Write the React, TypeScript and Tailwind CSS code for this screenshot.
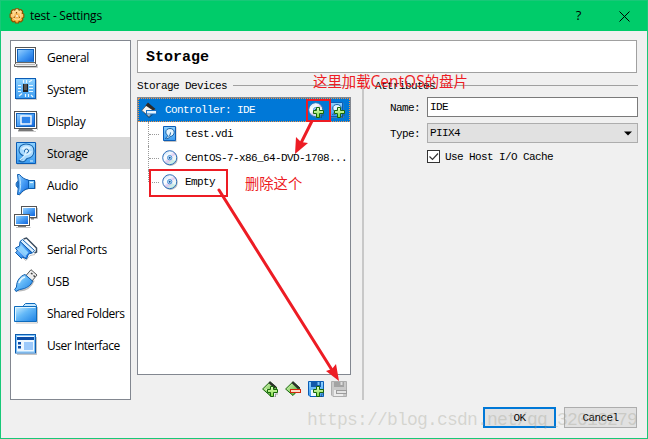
import type { ReactNode } from "react";

const mono = "font-['Liberation_Mono','Noto_Sans_CJK_SC',monospace] text-[11px] tracking-[-0.6px] leading-3 whitespace-pre";
const sans = "font-['Open_Sans','Noto_Sans',sans-serif] text-[12px] whitespace-pre";

// Gradients shared by every icon in the window
function Gradients() {
  return (
    <svg width="0" height="0" className="absolute" aria-hidden="true">
      <defs>
        <linearGradient id="screen" x1="0" y1="0" x2="1" y2="1">
          <stop offset="0" stopColor="#9ad2ff" />
          <stop offset="0.5" stopColor="#469cf4" />
          <stop offset="1" stopColor="#1266dc" />
        </linearGradient>
        <linearGradient id="tile" x1="0" y1="0" x2="0" y2="1">
          <stop offset="0" stopColor="#8fd2ff" />
          <stop offset="1" stopColor="#3c9cf0" />
        </linearGradient>
        <linearGradient id="folder" x1="0" y1="0" x2="1" y2="1">
          <stop offset="0" stopColor="#d5f3ff" />
          <stop offset="0.45" stopColor="#64b9f8" />
          <stop offset="1" stopColor="#1c80e4" />
        </linearGradient>
        <linearGradient id="disc" x1="0" y1="0" x2="1" y2="1">
          <stop offset="0" stopColor="#b5d2f2" />
          <stop offset="0.35" stopColor="#f4fbff" />
          <stop offset="0.55" stopColor="#dcc9ee" />
          <stop offset="0.75" stopColor="#c9f3e4" />
          <stop offset="1" stopColor="#a5c8ef" />
        </linearGradient>
        <linearGradient id="gold" x1="0" y1="0" x2="0" y2="1">
          <stop offset="0" stopColor="#ffe9ad" />
          <stop offset="1" stopColor="#fba428" />
        </linearGradient>
        <linearGradient id="green" x1="0" y1="0" x2="1" y2="1">
          <stop offset="0" stopColor="#e6ffc6" />
          <stop offset="1" stopColor="#3fa51c" />
        </linearGradient>
        <linearGradient id="lime" x1="0" y1="0" x2="0" y2="1">
          <stop offset="0" stopColor="#e9ffc8" />
          <stop offset="1" stopColor="#7bd93f" />
        </linearGradient>
      </defs>
    </svg>
  );
}

function Icon24({ children }: { children: ReactNode }) {
  return <svg width="24" height="24" viewBox="0 0 24 24" className="shrink-0">{children}</svg>;
}

function Icon16({ children }: { children: ReactNode }) {
  return <svg width="16" height="16" viewBox="0 0 16 16" className="shrink-0">{children}</svg>;
}

const GeneralIcon = () => (
  <Icon24>
    <path d="M3 22.5H23.5V19" fill="none" stroke="#999" strokeOpacity=".5" />
    <rect x="1.500" y="2.500" width="20" height="15" fill="#fff" stroke="#555" />
    <rect x="3.500" y="4.500" width="16" height="12" fill="url(#screen)" stroke="#1160b8" />
    <path d="M2.500 17.500H20.500L22.500 19.500V21.500H.5V19.500Z" fill="#eee" stroke="#666" />
    <path d="M3 16.500H20" stroke="#2c84de" />
    <path d="M2 19.500H21" stroke="#bbb" />
  </Icon24>
);

const SystemIcon = () => (
  <Icon24>
    <rect x="2" y="2.500" width="21" height="20.500" fill="#999" opacity=".5" />
    <rect x="1.500" y="1.500" width="20" height="20" fill="url(#tile)" stroke="#0b5cb5" />
    <path d="M4 8.500h3M4 11.500h3M4 14.500h3M15 8.500h4M15 11.500h4M15 14.500h4M9.500 3v3M12.500 3v3M15 5l3-2M5 19l3-2.500M11.500 17v3M14.500 17v3M17 18l2 2" stroke="#e8f7ff" strokeWidth="1.200" />
    <rect x="9" y="7" width="5" height="8" fill="#222" />
    <rect x="10" y="7" width="3" height="6" fill="#555" />
  </Icon24>
);

const DisplayIcon = () => (
  <Icon24>
    <path d="M4 22.500h18M23.500 4v17" stroke="#aaa" strokeOpacity=".6" />
    <path d="M5 20h13l2 2H4z" fill="#777" />
    <rect x=".5" y="2.500" width="22" height="17" fill="#fff" stroke="#555" />
    <rect x="2.500" y="4.500" width="18" height="13" fill="url(#screen)" stroke="#1160b8" />
    <rect x="7" y="7" width="10" height="8" fill="#2c83ea" stroke="#fff" strokeWidth="1.400" />
  </Icon24>
);

const DiskShape = () => (
  <>
    <path d="M3 2h19.500v21.500H3z" fill="#888" opacity=".5" />
    <path d="M2.500 1.500h19v21h-19z" fill="url(#tile)" stroke="#0b5cb5" />
    <path d="M12 3c5 0 8 3 8 7s-3 7-7 7.500c-2 3.500-5 4-8 2.500 3-1 4-3 5-5-3-1-5-3-5-6 0-3.500 3-6 7-6z" fill="#a9daff" stroke="#1763aa" strokeWidth="1.100" />
    <path d="M7 8c2-3 7-4 10-1l-4 3zM10 14c4 1 7-1 8-4l-5 1z" fill="#e8f8ff" opacity=".8" />
    <circle cx="12.500" cy="10" r="2" fill="#e8f8ff" stroke="#1763aa" />
    <path d="M12 10c0 4-3 7-6 9" fill="none" stroke="#d5efff" strokeWidth="1.500" />
    <path d="M16 20h3" stroke="#e8f8ff" />
  </>
);

const AudioIcon = () => (
  <Icon24>
    <path d="M5.500 22.500c2.500-4 5-6 9.500-7h6.500v-7" fill="none" stroke="#888" strokeOpacity=".6" />
    <path d="M3.500 1.500h2c3 3.500 5.500 5 9 5.500v8.500c-3.500.500-6 2.500-9 6h-2C4.500 15 4.500 8 3.500 1.500z" fill="url(#screen)" stroke="#0d5cae" />
    <path d="M4 8.500c-2.500 0-2.500 6 0 6z" fill="#3a90e6" stroke="#0d5cae" />
    <path d="M5.500 4c1.500 5 1.500 10 0 15" fill="none" stroke="#b5e0ff" />
    <rect x="14.500" y="7.500" width="6" height="8" fill="url(#tile)" stroke="#0d5cae" />
    <path d="M16 9.500h3" stroke="#e8f8ff" />
  </Icon24>
);

const NetworkIcon = () => (
  <Icon24>
    <path d="M8 13.500h15.500V3M2 22.500h14.500" fill="none" stroke="#888" strokeOpacity=".5" />
    <rect x="7.500" y="1.500" width="15" height="11" fill="#fff" stroke="#555" />
    <rect x="9" y="3" width="12" height="8" fill="url(#screen)" />
    <rect x="17" y="13" width="3" height="1.500" fill="#777" />
    <rect x=".5" y="9.500" width="15" height="11" fill="#fff" stroke="#555" />
    <rect x="2" y="11" width="12" height="8" fill="url(#screen)" />
    <path d="M4 21.500h8" stroke="#777" />
  </Icon24>
);

const SerialIcon = () => (
  <Icon24>
    <path d="M4 17l8 6.500 4-5 5-1" fill="none" stroke="#888" strokeOpacity=".5" />
    <path d="M9.500 2l3-1L22.500 11v4l-2 1" fill="none" stroke="#3b4d60" strokeWidth="1.500" />
    <path d="M8.500 2.500L20.500 13.500l-2 2.500L6 4.500z" fill="#d9efff" stroke="#0d5cae" />
    <path d="M6 4.500L18 16l-3.500 1-2 5-4-2-1 1.500-6-6 2-1.500L1.500 11l4-2z" fill="url(#screen)" stroke="#0d5cae" />
    <path d="M7 8l7.500 7.500-3 3.500-7-7z" fill="#8ed2ff" />
    <path d="M3 11.500l8.500 8.500" stroke="#d5efff" />
  </Icon24>
);

const UsbIcon = () => (
  <Icon24>
    <path d="M3 21.500c9 1 14-3 17-10" fill="none" stroke="#777" strokeOpacity=".5" strokeWidth="1.500" />
    <path d="M17 .700l6 5.300-5 6-6-5.500z" fill="#eee" stroke="#555" />
    <path d="M17 4l1.500 1.300M19.500 6.500L21 7.800" stroke="#444" strokeWidth="1.500" />
    <path d="M11 5.500l7.500 6.500c-1 4-6 8-13 8.500l-3.500 2L.700 20.500 2.500 18C2.500 12 6 7 11 5.500z" fill="url(#folder)" stroke="#0d5cae" />
    <path d="M5 14c1-3 3-5 6-6" fill="none" stroke="#e3f6ff" strokeWidth="1.800" />
  </Icon24>
);

const FolderIcon = () => (
  <Icon24>
    <path d="M2 22h21.500V6" fill="none" stroke="#888" strokeOpacity=".5" />
    <path d="M9.500 6V4.500l2-2H21l1.500 2V20h-13z" fill="#c5e8ff" stroke="#0d6bbd" />
    <path d="M.5 5.500h22v15H.5z" fill="url(#folder)" stroke="#0d6bbd" />
    <path d="M1.500 19.500v-13h20" fill="none" stroke="#e0f5ff" />
  </Icon24>
);

const InterfaceIcon = () => (
  <Icon24>
    <path d="M3 21.500h19.500V4" fill="none" stroke="#888" strokeOpacity=".5" />
    <rect x="1.500" y="1.500" width="20" height="18.500" fill="#fff" stroke="#0d5cae" />
    <rect x="2.500" y="2.500" width="18" height="16.500" fill="#eef7ff" stroke="#79c1fb" />
    <rect x="3" y="4" width="17" height="3" fill="#0b4ca6" />
    <rect x="4" y="9" width="3" height="2.500" fill="#0b4ca6" />
    <rect x="4" y="13" width="3" height="2.500" fill="#0b4ca6" />
    <rect x="10" y="9" width="9" height="8" fill="#9cc9fb" />
  </Icon24>
);

const GearIcon = () => (
  <Icon16>
    <path d="M6.500.700h3l.600 1.500 1.700-.700 2 2-.700 1.800 1.700.700v3.500l-1.700.700.700 1.800-2 2-1.700-.700-.600 1.700h-3l-.700-1.700-1.700.700-2-2 .700-1.800-1.700-.700V6l1.700-.700-.700-1.800 2-2 1.700.700z" fill="url(#gold)" stroke="#8a5200" strokeWidth="1.100" strokeLinejoin="round" />
    <circle cx="8" cy="8" r="4" fill="#ffc56b" stroke="#ffe2a2" strokeWidth=".8" />
    <circle cx="8" cy="8" r="1.500" fill="#fffbe8" stroke="#e09a35" strokeWidth=".7" />
    <path d="M7.500 4v1.500M4.500 9.500L6 9M11 9.500L10 9" stroke="#8a4800" strokeWidth="1.200" />
  </Icon16>
);

const Plus = () => (
  <>
    <path d="M9.500 16h4v-3h2.500" fill="none" stroke="#333" strokeOpacity=".4" />
    <path d="M8.500 5.500h3v3h4v3h-4v4h-3v-4h-3v-3h3z" fill="url(#lime)" stroke="#17670b" />
  </>
);

const Disc = () => (
  <>
    <circle cx="8.500" cy="8.700" r="7.200" fill="#777" opacity=".5" />
    <circle cx="7.700" cy="7.700" r="7" fill="url(#disc)" stroke="#2f6fb9" />
    <path d="M7.700 7.700L3 4.500A6 6 0 0 0 2.500 11zM7.700 7.700l5.500-3A6 6 0 0 1 13.200 11z" fill="#fff" opacity=".65" />
    <circle cx="7.700" cy="7.700" r="2.200" fill="#cdeaff" stroke="#4b97d9" />
    <circle cx="7.700" cy="7.700" r="1" fill="#154f97" />
  </>
);

const DiskSmall = () => (
  <>
    <path d="M2 1h12.500v15H2z" fill="#888" opacity=".5" />
    <path d="M1.500.500h12v14h-12z" fill="url(#tile)" stroke="#0b5cb5" />
    <path d="M8 2.500c2.800 0 4.200 1.800 4.200 3.800 0 2.500-2 4-4 4.200C7 12.500 5.500 13 3.300 12.500c1.500-1 2-2 2.500-3C4.300 8.500 3.800 7.500 3.800 6c0-2 1.700-3.500 4.200-3.500z" fill="#e4f5ff" stroke="#1763aa" />
    <path d="M6 11.500c1.500-1.500 2.500-3 2.500-5" fill="none" stroke="#1763aa" />
  </>
);

const ControllerIcon = () => (
  <Icon16>
    <path d="M2 10l6 5 6-5v1l-6 5z" fill="#234" opacity=".7" />
    <path d="M7 1.500L14 8l-6 6.500L.8 8.500z" fill="#f6f6f4" stroke="#555" strokeWidth=".8" />
    <path d="M7 .5L14.500 7 12 8.500 4.500 3.500z" fill="#2d2a28" />
    <rect x="5.500" y="8.500" width="10" height="3.500" fill="#e5f5ff" stroke="#1771c5" />
  </Icon16>
);

const AddController = () => (
  <Icon16>
    <path d="M8 .8L15 7l-7 7.500L.6 8z" fill="url(#green)" stroke="#17670b" />
    <path d="M8 .3l6.500 5.500L12.500 7.500 6.500 2z" fill="#2c302b" />
    <path d="M3.500 8L8 11" stroke="#eaffde" />
    <Plus />
  </Icon16>
);

const RemoveController = () => (
  <Icon16>
    <path d="M8 .8L15 7l-7 7.500L.6 8z" fill="url(#green)" stroke="#17670b" />
    <path d="M8 .3l7 6.500-2 1.500L6.500 2z" fill="#2c302b" />
    <rect x="5.500" y="8.500" width="10" height="3" fill="#ffd9c5" stroke="#d2260c" />
  </Icon16>
);

const AddAttachment = () => (
  <Icon16>
    <path d="M.5.500h15v15H2L.5 14z" fill="url(#tile)" stroke="#0b5cb5" />
    <path d="M3 1h10v5H3z" fill="#1258a9" />
    <path d="M9.500 1h2v3h-2z" fill="#7bc4fa" />
    <path d="M3 9h9v6H3z" fill="#edf9ff" />
    <Plus />
  </Icon16>
);

const RemoveAttachment = () => (
  <Icon16>
    <path d="M.5.500h15v15H2L.5 14z" fill="#c9c9c9" stroke="#adadad" />
    <path d="M3 1h10v5H3z" fill="#a3a3a3" />
    <path d="M9.500 1h2v3h-2z" fill="#ddd" />
    <path d="M3 9h9v6H3z" fill="#ececec" />
    <rect x="5.500" y="9.500" width="10" height="3" fill="#e3e3e3" stroke="#9c9c9c" />
  </Icon16>
);

const categories = [
  { label: "General", icon: <GeneralIcon /> },
  { label: "System", icon: <SystemIcon /> },
  { label: "Display", icon: <DisplayIcon /> },
  { label: "Storage", icon: <Icon24><DiskShape /></Icon24>, active: true },
  { label: "Audio", icon: <AudioIcon /> },
  { label: "Network", icon: <NetworkIcon /> },
  { label: "Serial Ports", icon: <SerialIcon /> },
  { label: "USB", icon: <UsbIcon /> },
  { label: "Shared Folders", icon: <FolderIcon /> },
  { label: "User Interface", icon: <InterfaceIcon /> },
];

const devices = [
  { label: "test.vdi", icon: <Icon16><DiskSmall /></Icon16> },
  { label: "CentOS-7-x86_64-DVD-1708...", icon: <Icon16><Disc /></Icon16> },
  { label: "Empty", icon: <Icon16><Disc /></Icon16>, last: true },
];

function TitleBar() {
  return (
    <header className="flex h-[30px] items-center bg-[#00cc6a] pl-2">
      <div className="-mt-px"><GearIcon /></div>
      <h1 className={`${sans} ml-[5px] flex-1 tracking-[-0.25px]`}>test - Settings</h1>
      <span className={`${sans} w-[45px] text-center text-[13px]`}>?</span>
      <button className="flex w-[46px] justify-center" aria-label="Close">
        <svg width="11" height="11" viewBox="0 0 11 11"><path d="M.5.500l10 10M10.500.500l-10 10" stroke="#000" /></svg>
      </button>
    </header>
  );
}

function Sidebar() {
  return (
    <nav className="h-[360px] w-[121px] border border-[#828790] bg-white">
      {categories.map((c) => (
        <div key={c.label} className={`flex h-8 items-center pl-[3px] ${c.active ? "bg-[#d9d9d9]" : ""}`}>
          {c.icon}
          <span className={`${sans} ml-[9px] pt-[2px] ${c.label.length > 13 ? "tracking-[-0.45px]" : "tracking-[-0.3px]"}`}>{c.label}</span>
        </div>
      ))}
    </nav>
  );
}

function GroupTitle({ children }: { children: string }) {
  return (
    <div className="flex h-[14px] items-center">
      <span className={mono}>{children}</span>
      <div className="mb-[2px] ml-1.5 h-px flex-1 bg-[#a0a0a0]" />
    </div>
  );
}

function DeviceTree() {
  return (
    <div className="mt-[4px] h-[278px] border border-[#828790] bg-white">
      <div className="flex h-6 items-center border border-dotted border-[#f29445] bg-[#0078d7] pl-[2px] pr-[4px]">
        <ControllerIcon />
        <span className={`${mono} ml-2 flex-1 text-white`}>Controller: IDE</span>
        <Icon16><Disc /><Plus /></Icon16>
        <div className="ml-[5px] flex"><Icon16><DiskSmall /><Plus /></Icon16></div>
      </div>
      {devices.map((d) => (
        <div key={d.label} className="flex h-6 items-center pl-[10px]">
          <div className={`w-px border-l border-dotted border-[#999] ${d.last ? "h-3 self-start" : "h-6"}`} />
          <div className="mr-[3px] w-[10px] border-t border-dotted border-[#999]" />
          {d.icon}
          <span className={`${mono} ml-[7px]`}>{d.label}</span>
        </div>
      ))}
    </div>
  );
}

function Attributes() {
  return (
    <section className="ml-[11px] w-[263px] pt-[3px]">
      <GroupTitle>Attributes</GroupTitle>
      <div className="mt-[4px] grid grid-cols-[52px_211px] items-center gap-y-[6px]">
        <label className={`${mono} pl-[15px] pt-px`}>Name:</label>
        <div className="flex h-5 items-center border border-[#7a7a7a] bg-white pl-[2px]"><span className={mono}>IDE</span></div>
        <label className={`${mono} pl-[15px] pt-px`}>Type:</label>
        <div className="flex h-5 items-center justify-between border border-[#adadad] bg-[#e1e1e1] pl-[2px] pr-[5px]">
          <span className={mono}>PIIX4</span>
          <svg width="8" height="5" viewBox="0 0 8 5"><path d="M0 .500h8L4 4.500z" /></svg>
        </div>
        <div className="col-start-2 flex items-center pt-px">
          <div className="flex size-[13px] items-center justify-center border border-[#333] bg-white">
            <svg width="11" height="11" viewBox="0 0 11 11"><path d="M1.500 5.500l3 3 5.500-6" fill="none" stroke="#333" strokeWidth="1.200" /></svg>
          </div>
          <span className={`${mono} ml-[5px] pt-px`}>Use Host I/O Cache</span>
        </div>
      </div>
    </section>
  );
}

// Red hand-drawn notes laid over the dialog
function Annotations() {
  return (
    <div className="pointer-events-none absolute -left-px -top-px h-[439px] w-[648px]">
      <svg width="648" height="439" viewBox="0 0 648 439" className="absolute inset-0">
        <g fill="none" stroke="#ed1c24" strokeWidth="2">
          <rect x="307" y="100" width="23" height="21" />
          <rect x="150" y="170" width="77" height="26" />
          <path d="M312 121L300 145" strokeWidth="3" />
          <path d="M219 190L332 370" strokeWidth="3" strokeLinecap="round" />
        </g>
        <path d="M295 154L296 137L301 142L308 143Z" fill="#ed1c24" />
        <path d="M339 381L326 371L332 369L336 364Z" fill="#ed1c24" />
      </svg>
      <span className="absolute left-[313px] top-[71px] whitespace-nowrap font-['Noto_Sans_CJK_SC',sans-serif] text-[14.400px] leading-5 text-[#ed1c24]">这里加载<span className="font-['Open_Sans',sans-serif] text-[15.500px]">CentOS</span>的盘片</span>
      <span className="absolute left-[245px] top-[173px] whitespace-nowrap font-['Noto_Sans_CJK_SC',sans-serif] text-[14.300px] leading-5 text-[#ed1c24]">删除这个</span>
      <span className="absolute left-[307px] top-[408px] whitespace-nowrap font-['Liberation_Mono',monospace] text-[18px] leading-6 tracking-[-0.8px] text-[#a0a090]/35">https://blog.csdn.net/qq_32013279</span>
    </div>
  );
}

export default function App() {
  return (
    <div className="relative h-[439px] w-[648px] overflow-hidden border border-[#18c878] bg-[#f0f0f0] text-black">
      <Gradients />
      <TitleBar />
      <main className="flex gap-[6px] pl-[9px] pt-[9px]">
        <Sidebar />
        <div className="w-[501px]">
          <div className="flex h-[33px] w-[500px] items-center border border-[#a0a0a0] bg-white pl-2">
            <h2 className="pt-[2px] font-['Liberation_Mono',monospace] text-[15px] font-bold leading-4">Storage</h2>
          </div>
          <div className="flex pt-[3px]">
            <section className="w-[214px] pt-[3px]">
              <GroupTitle>Storage Devices</GroupTitle>
              <DeviceTree />
              <div className="mt-[6px] flex justify-end gap-[7px] pr-[4px]">
                <AddController />
                <RemoveController />
                <AddAttachment />
                <RemoveAttachment />
              </div>
            </section>
            <div className="ml-[11px] h-[324px] w-[2px] bg-[#c8c8c8]" />
            <Attributes />
          </div>
        </div>
      </main>
      <footer className="mt-[7px] flex justify-end gap-2 pr-[10px]">
        <button className={`${mono} h-[21px] w-[73px] border-2 border-[#0078d7] bg-[#e1e1e1] pt-px`}>OK</button>
        <button className={`${mono} h-[21px] w-[73px] border border-[#adadad] bg-[#e1e1e1] pt-px`}>Cancel</button>
      </footer>
      <Annotations />
    </div>
  );
}
